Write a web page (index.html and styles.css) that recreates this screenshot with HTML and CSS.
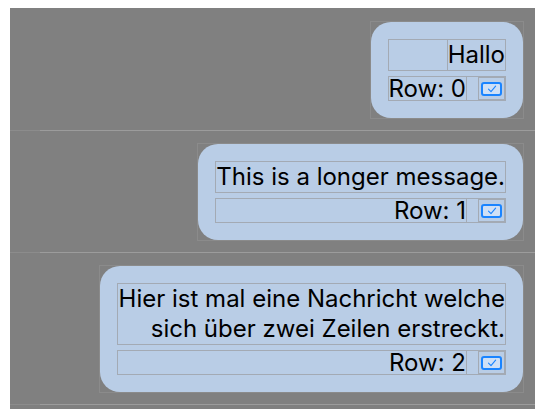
FILE: index.html
```html
<!DOCTYPE html>
<html lang="de">
<head>
  <meta charset="UTF-8" />
  <meta name="viewport" content="width=device-width, initial-scale=1.0" />
  <title>Chat</title>
  <link rel="stylesheet" href="styles.css">
</head>
<body>
  <div id="chat-list">
    <div class="chat-row">
      <div class="bubble-frame">
        <div class="bubble">
          <div class="msg msg-short"><span class="msg-text">Hallo</span></div>
          <div class="meta">
            <span class="row-label">Row: 0</span>
            <span class="check-cell"><span class="check-box"><span class="check"><svg viewBox="0 0 10 8" width="10" height="8"><path d="M1.5 4.2 L4 6.6 L8.6 1.2" fill="none" stroke="#1a84ff" stroke-width="1.1" stroke-linecap="round" stroke-linejoin="round"/></svg></span></span></span>
          </div>
        </div>
      </div>
    </div>

    <div class="chat-row">
      <div class="bubble-frame">
        <div class="bubble">
          <div class="msg"><span class="msg-text">This is a longer message.</span></div>
          <div class="meta">
            <span class="row-label">Row: 1</span>
            <span class="check-cell"><span class="check-box"><span class="check"><svg viewBox="0 0 10 8" width="10" height="8"><path d="M1.5 4.2 L4 6.6 L8.6 1.2" fill="none" stroke="#1a84ff" stroke-width="1.1" stroke-linecap="round" stroke-linejoin="round"/></svg></span></span></span>
          </div>
        </div>
      </div>
    </div>

    <div class="chat-row">
      <div class="bubble-frame">
        <div class="bubble">
          <div class="msg"><span class="msg-text">Hier ist mal eine Nachricht welche sich über zwei Zeilen erstreckt.</span></div>
          <div class="meta">
            <span class="row-label">Row: 2</span>
            <span class="check-cell"><span class="check-box"><span class="check"><svg viewBox="0 0 10 8" width="10" height="8"><path d="M1.5 4.2 L4 6.6 L8.6 1.2" fill="none" stroke="#1a84ff" stroke-width="1.1" stroke-linecap="round" stroke-linejoin="round"/></svg></span></span></span>
          </div>
        </div>
      </div>
    </div>
  </div>
</body>
</html>
```

FILE: styles.css
```css
:root {
  --list-bg: #808080;
  --bubble-bg: #b9cde6;
  --cell-border: #a3aab4;
  --separator: #9c9c9c;
}

body {
  margin: 0;
  background: #fff;
  font-family: Inter, "Liberation Sans", sans-serif;
  height: 409px;
  overflow: hidden;
}

#chat-list {
  margin: 8px 9px 0 10px;
  background: var(--list-bg);
  height: 401px;
}

.chat-row {
  display: flex;
  justify-content: flex-end;
  padding: 12px 11px 11px 0;
  border-bottom: 1px solid var(--separator);
  position: relative;
}
.chat-row:first-child {
  padding-top: 13px;
}
.chat-row::after {
  content: "";
  position: absolute;
  left: 0;
  bottom: -1px;
  width: 30px;
  height: 1px;
  background: #8c8c8c;
}

.bubble-frame {
  border: 1px solid #8b8b8b;
  max-width: 425px;
  box-sizing: border-box;
}

.bubble {
  background: var(--bubble-bg);
  border-radius: 20px;
  padding: 17px;
  display: flex;
  flex-direction: column;
  gap: 5px;
  color: #000;
  font-size: 24px;
}

.msg {
  border: 1px solid var(--cell-border);
  display: flex;
  justify-content: flex-end;
  text-align: right;
  line-height: 30px;
}
.msg-short .msg-text {
  border-left: 1px solid var(--cell-border);
}

.meta {
  border: 1px solid var(--cell-border);
  display: flex;
  align-items: stretch;
  line-height: 23px;
}

.row-label {
  flex: 1;
  text-align: right;
  border-right: 1px solid var(--cell-border);
  white-space: nowrap;
}

.check-cell {
  width: 38px;
  display: flex;
  justify-content: flex-end;
  align-items: center;
}

.check-box {
  border: 1px solid var(--cell-border);
  padding: 1px 2px;
  display: flex;
  align-self: stretch;
  align-items: center;
}

.check {
  width: 17px;
  height: 10px;
  border: 2px solid #1a84ff;
  border-radius: 3px;
  background: #cfe0f6;
  display: flex;
  align-items: center;
  justify-content: center;
}
```
